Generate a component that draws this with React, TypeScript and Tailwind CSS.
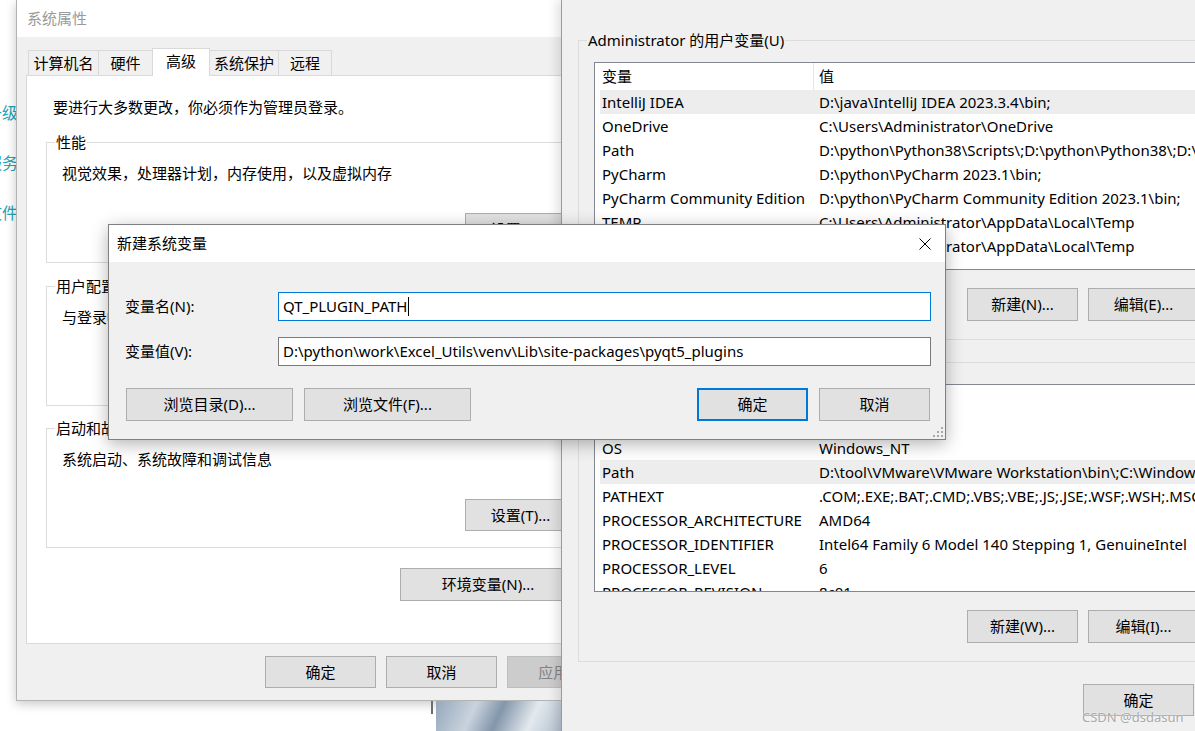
import { clsx } from "clsx";
import { twMerge } from "tailwind-merge";
import type { ReactNode } from "react";

function cn(...args: Parameters<typeof clsx>) {
  return twMerge(clsx(args));
}

const userVars: [string, string][] = [
  ["IntelliJ IDEA", "D:\\java\\IntelliJ IDEA 2023.3.4\\bin;"],
  ["OneDrive", "C:\\Users\\Administrator\\OneDrive"],
  ["Path", "D:\\python\\Python38\\Scripts\\;D:\\python\\Python38\\;D:\\tool\\bin;"],
  ["PyCharm", "D:\\python\\PyCharm 2023.1\\bin;"],
  ["PyCharm Community Edition", "D:\\python\\PyCharm Community Edition 2023.1\\bin;"],
  ["TEMP", "C:\\Users\\Administrator\\AppData\\Local\\Temp"],
  ["TMP", "C:\\Users\\Administrator\\AppData\\Local\\Temp"],
];

const systemVars: [string, string][] = [
  ["NUMBER_OF_PROCESSORS", "16"],
  ["OS", "Windows_NT"],
  ["Path", "D:\\tool\\VMware\\VMware Workstation\\bin\\;C:\\Windows\\system32;"],
  ["PATHEXT", ".COM;.EXE;.BAT;.CMD;.VBS;.VBE;.JS;.JSE;.WSF;.WSH;.MSC"],
  ["PROCESSOR_ARCHITECTURE", "AMD64"],
  ["PROCESSOR_IDENTIFIER", "Intel64 Family 6 Model 140 Stepping 1, GenuineIntel"],
  ["PROCESSOR_LEVEL", "6"],
  ["PROCESSOR_REVISION", "8c01"],
];

function Btn({
  children,
  className,
  primary,
  disabled,
}: {
  children: ReactNode;
  className?: string;
  primary?: boolean;
  disabled?: boolean;
}) {
  return (
    <div
      className={cn(
        "flex h-[32px] w-[111px] shrink-0 items-center justify-center border bg-[#e1e1e1] leading-none",
        primary ? "border-2 border-[#0078d7]" : "border-[#adadad]",
        disabled && "border-[#bfbfbf] bg-[#cccccc] text-[#838383]",
        className,
      )}
    >
      {children}
    </div>
  );
}

function Group({
  legend,
  text,
  button,
  className,
}: {
  legend: string;
  text: string;
  button: string;
  className?: string;
}) {
  return (
    <fieldset className={cn("mx-[19px] border border-[#dcdcdc] pb-[17px]", className)}>
      <legend className="ml-[8px] px-px leading-[20px]">{legend}</legend>
      <p className="pl-[15px] pt-[11px] leading-[20px]">{text}</p>
      <div className="flex justify-end pr-[34px] pt-[30px]">
        <Btn>{button}</Btn>
      </div>
    </fieldset>
  );
}

function VarList({ rows, highlight }: { rows: [string, string][]; highlight: string }) {
  return (
    <div className="mx-[15px] mt-[12px] h-[208px] overflow-hidden border border-[#828790] bg-white px-[5px]">
      <div className="flex h-[27px] items-center">
        <div className="flex h-full w-[214px] shrink-0 items-center border-r border-[#e5e5e5] pl-[2px]">变量</div>
        <div className="pl-[5px]">值</div>
      </div>
      {rows.map(([k, v]) => (
        <div
          key={k}
          className={cn("flex h-[24px] items-center whitespace-nowrap", k === highlight && "bg-[#ededed]")}
        >
          <div className="w-[213px] shrink-0 overflow-hidden pl-[2px]">{k}</div>
          <div className="pl-[6px]">{v}</div>
        </div>
      ))}
    </div>
  );
}

const tabs = [
  { label: "计算机名", w: "w-[71px]" },
  { label: "硬件", w: "w-[55px]" },
  { label: "高级", w: "w-[58px]", active: true },
  { label: "系统保护", w: "w-[70px]" },
  { label: "远程", w: "w-[54px]" },
];

export default function App() {
  return (
    <div className="relative h-[731px] w-[1195px] overflow-hidden bg-white font-['Noto_Sans','Noto_Sans_CJK_SC',sans-serif] text-[15px] text-black">
      {/* desktop behind: clipped sidebar links */}
      <div className="absolute left-[-14px] top-[101px] flex flex-col gap-[26px] text-[16px] leading-[24px] text-[#1fa3b5]">
        <span>升级</span>
        <span>服务</span>
        <span>文件</span>
      </div>

      {/* 系统属性 */}
      <div className="absolute left-[16px] top-0 flex h-[701px] w-[625px] flex-col border border-t-0 border-[#b4b4b4] bg-[#f0f0f0] shadow-[0_3px_10px_rgba(0,0,0,0.22)]">
        <div className="flex h-[37px] shrink-0 items-center bg-white pl-[10px] text-[#9a9a9a]">系统属性</div>
        <div className="flex flex-1 flex-col px-[9px] pt-[11px]">
          <div className="flex h-[27px] items-end pl-[2px]">
            {tabs.map((t) => (
              <div
                key={t.label}
                className={cn(
                  "-ml-px flex items-center justify-center border border-b-0 border-[#d9d9d9] first:ml-0",
                  t.w,
                  t.active ? "relative z-10 -mb-px h-[28px] bg-white pb-[3px]" : "h-[25px] bg-[#f0f0f0]",
                )}
              >
                {t.label}
              </div>
            ))}
          </div>
          <div className="flex h-[569px] flex-col border border-[#d9d9d9] bg-white">
            <p className="pl-[26px] pt-[21px] leading-[20px]">要进行大多数更改，你必须作为管理员登录。</p>
            <Group
              className="mt-[15px]"
              legend="性能"
              text="视觉效果，处理器计划，内存使用，以及虚拟内存"
              button="设置(S)..."
            />
            <Group
              className="mt-[13px] pb-[16px]"
              legend="用户配置文件"
              text="与登录帐户相关的桌面设置"
              button="设置(E)..."
            />
            <Group
              className="mt-[12px] pb-[16px]"
              legend="启动和故障恢复"
              text="系统启动、系统故障和调试信息"
              button="设置(T)..."
            />
            <div className="flex justify-end pr-[54px] pt-[20px]">
              <Btn className="h-[33px] w-[176px]">环境变量(N)...</Btn>
            </div>
          </div>
          <div className="flex justify-end gap-[10px] pr-[13px] pt-[12px]">
            <Btn>确定</Btn>
            <Btn>取消</Btn>
            <Btn disabled>应用(A)</Btn>
          </div>
        </div>
      </div>

      {/* wallpaper peeking out under the window */}
      <div className="absolute left-[431px] top-[701px] h-[13px] w-[2px] bg-[#6d6d6d]" />
      <div className="absolute left-[436px] top-[701px] h-[30px] w-[125px] bg-[linear-gradient(115deg,#95a8bc_0%,#c9d3dd_30%,#8396ab_50%,#e3e9ee_75%,#b3c1cf_100%)]" />

      {/* 环境变量 */}
      <div className="absolute left-[561px] top-0 flex h-[740px] w-[795px] flex-col border-l border-[#9a9a9a] bg-[#f0f0f0] pt-[30px] shadow-[-4px_0_10px_rgba(0,0,0,0.12)]">
        <fieldset className="mx-[16px] border border-[#dcdcdc] pb-[18px]">
          <legend className="ml-[8px] px-px leading-[20px]">Administrator 的用户变量(U)</legend>
          <VarList rows={userVars} highlight="IntelliJ IDEA" />
          <div className="flex justify-end gap-[10px] pr-[19px] pt-[18px]">
            <Btn className="h-[33px]">新建(N)...</Btn>
            <Btn className="h-[33px]">编辑(E)...</Btn>
            <Btn className="h-[33px]">删除(D)</Btn>
          </div>
        </fieldset>
        <fieldset className="mx-[16px] mt-[12px] border border-[#dcdcdc] pb-[18px]">
          <legend className="ml-[8px] px-px leading-[20px]">系统变量(S)</legend>
          <VarList rows={systemVars} highlight="Path" />
          <div className="flex justify-end gap-[10px] pr-[19px] pt-[18px]">
            <Btn className="h-[33px]">新建(W)...</Btn>
            <Btn className="h-[33px]">编辑(I)...</Btn>
            <Btn className="h-[33px]">删除(L)</Btn>
          </div>
        </fieldset>
        <div className="flex justify-end gap-[10px] pr-[41px] pt-[22px]">
          <Btn>确定</Btn>
          <Btn>取消</Btn>
        </div>
      </div>

      {/* 新建系统变量 */}
      <div className="absolute left-[108px] top-[224px] flex h-[216px] w-[838px] flex-col border border-[#7f7f7f] bg-[#f0f0f0] shadow-[0_4px_16px_rgba(0,0,0,0.3)]">
        <div className="flex h-[37px] shrink-0 items-center justify-between bg-white pl-[8px] pr-[14px]">
          <span>新建系统变量</span>
          <svg width="12" height="12" viewBox="0 0 12 12" className="shrink-0">
            <path d="M0.5 0.5 L11.5 11.5 M11.5 0.5 L0.5 11.5" stroke="#000" strokeWidth="1" fill="none" />
          </svg>
        </div>
        <div className="flex flex-col pl-[16px] pr-[14px] pt-[30px]">
          <div className="flex items-center">
            <span className="w-[153px] shrink-0">变量名(N):</span>
            <div className="flex h-[29px] w-[653px] items-center border border-[#0078d7] bg-white pl-[4px] whitespace-nowrap">
              QT_PLUGIN_PATH
              <span className="ml-px inline-block h-[19px] w-px bg-black" />
            </div>
          </div>
          <div className="mt-[16px] flex items-center">
            <span className="w-[153px] shrink-0">变量值(V):</span>
            <div className="flex h-[29px] w-[653px] items-center overflow-hidden border border-[#7a7a7a] bg-white pl-[4px] whitespace-nowrap">
              D:\python\work\Excel_Utils\venv\Lib\site-packages\pyqt5_plugins
            </div>
          </div>
          <div className="mt-[22px] flex justify-between pl-px pr-px">
            <div className="flex gap-[11px]">
              <Btn className="h-[33px] w-[167px]">浏览目录(D)...</Btn>
              <Btn className="h-[33px] w-[167px]">浏览文件(F)...</Btn>
            </div>
            <div className="flex gap-[11px]">
              <Btn primary className="h-[33px]">确定</Btn>
              <Btn className="h-[33px]">取消</Btn>
            </div>
          </div>
        </div>
        <svg width="10" height="10" viewBox="0 0 10 10" className="absolute bottom-[2px] right-[2px]">
          {[
            [8, 0],
            [4, 4],
            [8, 4],
            [0, 8],
            [4, 8],
            [8, 8],
          ].map(([x, y]) => (
            <rect key={`${x}-${y}`} x={x} y={y} width="2" height="2" fill="#a8a8a8" />
          ))}
        </svg>
      </div>

      {/* watermark */}
      <div className="absolute left-[1082px] top-[708px] text-[13px] leading-[18px] text-[#a9a9a9] [text-shadow:0_0_2px_#fff]">
        CSDN @dsdasun
      </div>
    </div>
  );
}
